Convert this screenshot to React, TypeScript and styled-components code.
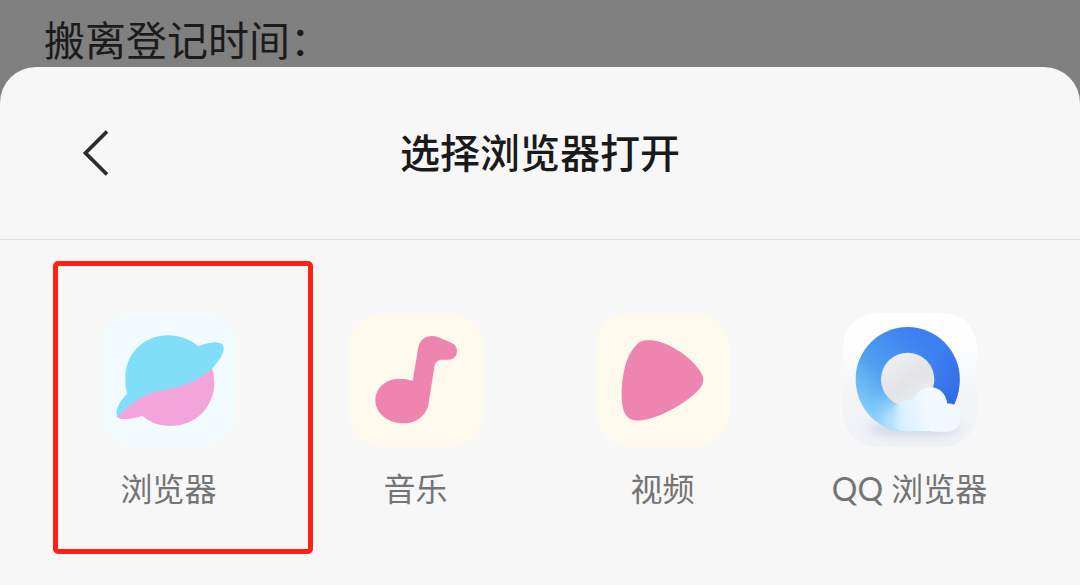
import React from "react";
import styled, { createGlobalStyle } from "styled-components";

const GlobalStyle = createGlobalStyle`
  *, *::before, *::after { box-sizing: border-box; }
  body {
    margin: 0;
    background: #808080;
    font-family: "Noto Sans CJK SC", "Noto Sans", sans-serif;
  }
`;

const Page = styled.div`
  display: flex;
  flex-direction: column;
  min-height: 100vh;
  background: #808080;
`;

const Backdrop = styled.div`
  padding: 8px 44px 0;
  height: 67px;
`;

const FieldLabel = styled.p`
  margin: 0;
  font-size: 41px;
  line-height: 60px;
  color: #1b1b1b;
`;

const Sheet = styled.main`
  flex: 1;
  background: #f7f7f7;
  border-radius: 36px 36px 0 0;
`;

const SheetHeader = styled.header`
  display: grid;
  grid-template-columns: 112px 1fr 112px;
  align-items: center;
  height: 173px;
  border-bottom: 1px solid #dedede;
`;

const BackButton = styled.button`
  display: flex;
  justify-content: flex-end;
  padding: 0;
  border: 0;
  background: none;
  cursor: pointer;
`;

const Title = styled.h1`
  margin: 0;
  padding-bottom: 4px;
  font-size: 40px;
  font-weight: 500;
  line-height: 60px;
  text-align: center;
  color: #1a1a1a;
`;

const AppGrid = styled.ul`
  display: grid;
  grid-template-columns: repeat(4, 1fr);
  margin: 0;
  padding: 73px 47px 48px 45px;
  list-style: none;
`;

const AppItem = styled.li`
  position: relative;
`;

const AppButton = styled.button`
  display: flex;
  flex-direction: column;
  align-items: center;
  gap: 18px;
  width: 100%;
  padding: 0;
  border: 0;
  background: none;
  font-family: inherit;
  cursor: pointer;
`;

const Tile = styled.span<{ $background: string }>`
  display: block;
  width: 134px;
  height: 134px;
  border-radius: 34px;
  background: ${(p) => p.$background};
  overflow: hidden;

  svg { display: block; }
`;

const AppName = styled.span`
  font-family: Lato, "Noto Sans CJK SC", sans-serif;
  font-size: 32px;
  line-height: 48px;
  white-space: nowrap;
  color: #747474;
`;

const Highlight = styled.span`
  position: absolute;
  top: -52px;
  left: 8px;
  width: 260px;
  height: 293px;
  border: 5px solid #ff2015;
  border-radius: 5px;
  pointer-events: none;
`;

const BackIcon = () => (
  <svg width="32" height="48" viewBox="0 0 32 48" fill="none" aria-hidden="true">
    <path d="M27 2.5 L5.5 24 L27 45.5" stroke="#2c2c2c" strokeWidth="3.8" />
  </svg>
);

const PlanetIcon = () => (
  <svg width="134" height="134" viewBox="36 39 402 402" aria-hidden="true">
    <path
      fill="#f2a5da"
      d="M80 348 C84 359 104 362 157 348 C181 368 209 378 240 378 C318 378 372 321 373 249 C373 232 370 217 366 204 L300 210 L160 270 Z"
    />
    <path
      fill="#80def9"
      d="M82 350 C75 333 84 308 112 281 C107 266 106 251 106 236 C106 160 161 106 235 106 C269 106 300 118 325 139 C364 124 393 122 400 138 C405 154 392 179 366 206 C351 219 340 226 323 236 C257 273 213 263 164 287 C137 300 108 324 82 350 Z"
    />
  </svg>
);

const MusicIcon = () => (
  <svg width="134" height="134" viewBox="43 39 402 402" aria-hidden="true">
    <path
      fill="#ee85ae"
      d="M234 242 C220 238 208 236 194 236 C153 236 122 265 122 301 C122 339 158 370 207 370 C248 370 277 344 282 309 L299 202 C301 187 309 179 323 179 L342 179 C357 179 367 168 367 153 C367 141 361 133 350 128 L309 111 C281 101 255 116 251 142 Z"
    />
  </svg>
);

const VideoIcon = () => (
  <svg width="134" height="134" viewBox="49 39 402 402" aria-hidden="true">
    <path
      fill="#ee85ae"
      d="M168 137 C179 123 194 119 216 121 C271 126 350 181 369 228 C374 242 369 256 359 267 C319 311 241 354 186 361 C160 364 145 358 135 339 C123 314 123 260 133 213 C140 180 151 155 168 137 Z"
    />
  </svg>
);

const QQBrowserIcon = () => (
  <svg width="134" height="134" viewBox="38 39 402 402" aria-hidden="true">
    <defs>
      <linearGradient id="ring" x1="130" y1="365" x2="320" y2="160" gradientUnits="userSpaceOnUse">
        <stop offset="0" stopColor="#84cefb" />
        <stop offset="0.45" stopColor="#4f9ff1" />
        <stop offset="1" stopColor="#3b7ff0" />
      </linearGradient>
      <linearGradient id="ringShade" x1="290" y1="180" x2="375" y2="310" gradientUnits="userSpaceOnUse">
        <stop offset="0" stopColor="#3068e4" stopOpacity="0" />
        <stop offset="1" stopColor="#3068e4" />
      </linearGradient>
      <radialGradient id="ringLight" cx="215" cy="370" r="125" gradientUnits="userSpaceOnUse">
        <stop offset="0" stopColor="#d4f1fe" />
        <stop offset="0.4" stopColor="#b0e1fd" stopOpacity="0.85" />
        <stop offset="1" stopColor="#79c9fa" stopOpacity="0" />
      </radialGradient>
      <linearGradient id="lens" x1="180" y1="175" x2="265" y2="310" gradientUnits="userSpaceOnUse">
        <stop offset="0" stopColor="#eeeff2" />
        <stop offset="0.55" stopColor="#e2e3e7" />
        <stop offset="1" stopColor="#ecedf0" />
      </linearGradient>
      <linearGradient id="cloud" x1="185" y1="345" x2="290" y2="325" gradientUnits="userSpaceOnUse">
        <stop offset="0" stopColor="#d0eefd" stopOpacity="0" />
        <stop offset="0.3" stopColor="#d9f1fd" />
        <stop offset="1" stopColor="#f3f8fe" />
      </linearGradient>
      <filter id="soft" x="-30%" y="-150%" width="160%" height="400%">
        <feGaussianBlur stdDeviation="16" />
      </filter>
    </defs>
    <ellipse cx="250" cy="386" rx="140" ry="18" fill="#b6bfdb" opacity="0.65" filter="url(#soft)" />
    <path
      fill="url(#ring)"
      d="M232 81 A156 156 0 0 1 388 237 C388 270 380 300 365 325 L300 395 L224 395 C138 390 76 323 76 237 A156 156 0 0 1 232 81 Z"
    />
    <path
      fill="url(#ringShade)"
      d="M232 81 A156 156 0 0 1 388 237 C388 270 380 300 365 325 L300 395 L232 395 Z"
    />
    <path
      fill="url(#ringLight)"
      d="M76 237 C76 323 138 390 224 395 L300 395 L300 237 Z"
    />
    <circle cx="232" cy="238" r="80" fill="url(#lens)" />
    <path
      fill="url(#cloud)"
      d="M190 320 C208 302 227 296 250 301 C256 276 276 262 301 262 C328 262 347 282 351 311 C374 308 390 327 390 351 C390 378 374 395 348 395 L224 395 C195 394 174 382 170 360 Z"
    />
  </svg>
);

interface BrowserApp {
  name: string;
  background: string;
  icon: React.ReactNode;
  highlighted?: boolean;
}

const apps: BrowserApp[] = [
  { name: "浏览器", background: "#f1fbfe", icon: <PlanetIcon />, highlighted: true },
  { name: "音乐", background: "#fdf9ec", icon: <MusicIcon /> },
  { name: "视频", background: "#fdf9ec", icon: <VideoIcon /> },
  {
    name: "QQ 浏览器",
    background: "linear-gradient(180deg, #ffffff 0%, #fefefe 20%, #f2f4f8 60%, #f1f2f6 100%)",
    icon: <QQBrowserIcon />,
  },
];

export default function App() {
  return (
    <>
      <GlobalStyle />
      <Page>
        <Backdrop>
          <FieldLabel>搬离登记时间：</FieldLabel>
        </Backdrop>
        <Sheet>
          <SheetHeader>
            <BackButton type="button" aria-label="返回">
              <BackIcon />
            </BackButton>
            <Title>选择浏览器打开</Title>
          </SheetHeader>
          <AppGrid>
            {apps.map((app) => (
              <AppItem key={app.name}>
                <AppButton type="button">
                  <Tile $background={app.background}>{app.icon}</Tile>
                  <AppName>{app.name}</AppName>
                </AppButton>
                {app.highlighted && <Highlight />}
              </AppItem>
            ))}
          </AppGrid>
        </Sheet>
      </Page>
    </>
  );
}
